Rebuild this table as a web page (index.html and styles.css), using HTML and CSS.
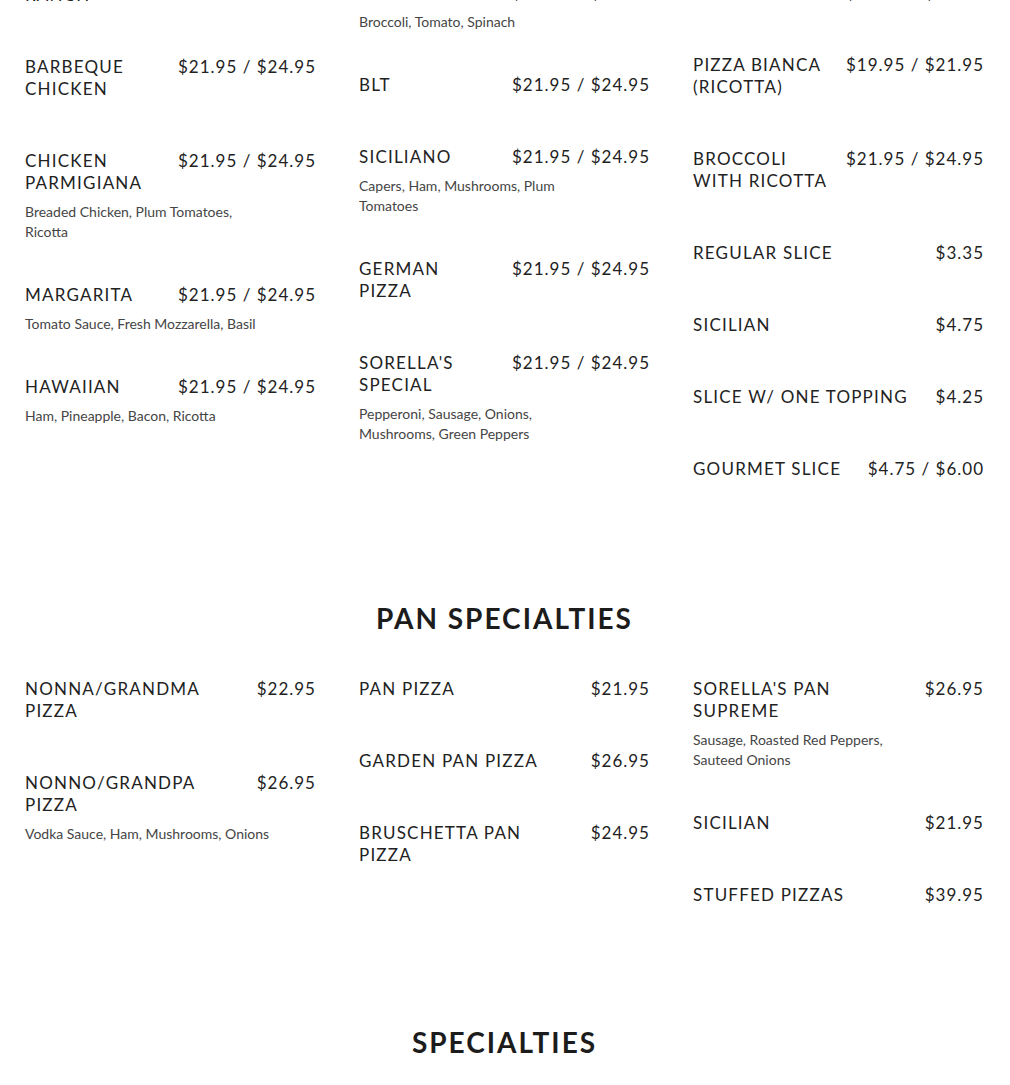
FILE: index.html
```html
<!DOCTYPE html>
<html lang="en">
<head>
<meta charset="utf-8">
<title>Menu</title>
<link rel="stylesheet" href="styles.css">
</head>
<body>
<main class="menu">
  <section class="section section-first">
    <div class="cols">
      <div class="col">
        <div class="item"><div class="head"><h3 class="name">CALZONE</h3><span class="price">$21.95 / $24.95</span></div></div>
        <div class="item"><div class="head"><h3 class="name">BUFFALO RANCH</h3><span class="price">$21.95 / $24.95</span></div></div>
        <div class="item"><div class="head"><h3 class="name">BARBEQUE CHICKEN</h3><span class="price">$21.95 / $24.95</span></div></div>
        <div class="item"><div class="head"><h3 class="name">CHICKEN PARMIGIANA</h3><span class="price">$21.95 / $24.95</span></div><p class="desc">Breaded Chicken, Plum Tomatoes, Ricotta</p></div>
        <div class="item"><div class="head"><h3 class="name">MARGARITA</h3><span class="price">$21.95 / $24.95</span></div><p class="desc">Tomato Sauce, Fresh Mozzarella, Basil</p></div>
        <div class="item"><div class="head"><h3 class="name">HAWAIIAN</h3><span class="price">$21.95 / $24.95</span></div><p class="desc">Ham, Pineapple, Bacon, Ricotta</p></div>
      </div>
      <div class="col">
        <div class="item"><div class="head"><h3 class="name">MEAT LOVERS</h3><span class="price">$21.95 / $24.95</span></div><p class="desc">Pepperoni, Sausage, Meatball</p></div>
        <div class="item"><div class="head"><h3 class="name">VEGGIE</h3><span class="price">$21.95 / $24.95</span></div><p class="desc">Broccoli, Tomato, Spinach</p></div>
        <div class="item"><div class="head"><h3 class="name">BLT</h3><span class="price">$21.95 / $24.95</span></div></div>
        <div class="item"><div class="head"><h3 class="name">SICILIANO</h3><span class="price">$21.95 / $24.95</span></div><p class="desc">Capers, Ham, Mushrooms, Plum Tomatoes</p></div>
        <div class="item"><div class="head"><h3 class="name">GERMAN PIZZA</h3><span class="price">$21.95 / $24.95</span></div></div>
        <div class="item"><div class="head"><h3 class="name">SORELLA'S SPECIAL</h3><span class="price">$21.95 / $24.95</span></div><p class="desc">Pepperoni, Sausage, Onions, Mushrooms, Green Peppers</p></div>
      </div>
      <div class="col">
        <div class="item"><div class="head"><h3 class="name">WHITE PIZZA</h3><span class="price">$21.95 / $24.95</span></div><p class="desc">Ricotta, Mozzarella, Garlic</p></div>
        <div class="item"><div class="head"><h3 class="name">SPINACH</h3><span class="price">$21.95 / $24.95</span></div></div>
        <div class="item"><div class="head"><h3 class="name">PIZZA BIANCA (RICOTTA)</h3><span class="price">$19.95 / $21.95</span></div></div>
        <div class="item"><div class="head"><h3 class="name">BROCCOLI WITH RICOTTA</h3><span class="price">$21.95 / $24.95</span></div></div>
        <div class="item"><div class="head"><h3 class="name">REGULAR SLICE</h3><span class="price">$3.35</span></div></div>
        <div class="item"><div class="head"><h3 class="name">SICILIAN</h3><span class="price">$4.75</span></div></div>
        <div class="item"><div class="head"><h3 class="name">SLICE W/ ONE TOPPING</h3><span class="price">$4.25</span></div></div>
        <div class="item"><div class="head"><h3 class="name">GOURMET SLICE</h3><span class="price">$4.75 / $6.00</span></div></div>
      </div>
    </div>
  </section>

  <section class="section">
    <h2 class="section-title">PAN SPECIALTIES</h2>
    <div class="cols">
      <div class="col">
        <div class="item"><div class="head"><h3 class="name">NONNA/GRANDMA PIZZA</h3><span class="price">$22.95</span></div></div>
        <div class="item"><div class="head"><h3 class="name">NONNO/GRANDPA PIZZA</h3><span class="price">$26.95</span></div><p class="desc">Vodka Sauce, Ham, Mushrooms, Onions</p></div>
      </div>
      <div class="col">
        <div class="item"><div class="head"><h3 class="name">PAN PIZZA</h3><span class="price">$21.95</span></div></div>
        <div class="item"><div class="head"><h3 class="name">GARDEN PAN PIZZA</h3><span class="price">$26.95</span></div></div>
        <div class="item"><div class="head"><h3 class="name">BRUSCHETTA PAN PIZZA</h3><span class="price">$24.95</span></div></div>
      </div>
      <div class="col">
        <div class="item"><div class="head"><h3 class="name">SORELLA'S PAN SUPREME</h3><span class="price">$26.95</span></div><p class="desc desc-narrow">Sausage, Roasted Red Peppers, Sauteed Onions</p></div>
        <div class="item"><div class="head"><h3 class="name">SICILIAN</h3><span class="price">$21.95</span></div></div>
        <div class="item"><div class="head"><h3 class="name">STUFFED PIZZAS</h3><span class="price">$39.95</span></div></div>
      </div>
    </div>
  </section>

  <section class="section">
    <h2 class="section-title section-title-last">SPECIALTIES</h2>
  </section>
</main>
</body>
</html>
```
FILE: styles.css
```css
* { box-sizing: border-box; }

html, body {
  margin: 0;
  padding: 0;
  background: #ffffff;
}

body {
  font-family: "Lato", "Liberation Sans", sans-serif;
  color: #222222;
  overflow: hidden;
}

.menu {
  padding: 0 26px 0 25px;
}

.section-first {
  margin-top: -110px;
}

.section-title {
  margin: 71px 0 43px;
  font-size: 28px;
  line-height: 34px;
  font-weight: 700;
  letter-spacing: 2px;
  text-align: center;
  color: #1c1c1c;
}

.section-title-last {
  margin-top: 69px;
}

.cols {
  display: grid;
  grid-template-columns: repeat(3, 1fr);
  column-gap: 43px;
  align-items: start;
}

.col {
  display: flex;
  flex-direction: column;
}

.item {
  padding-bottom: 42px;
}

.head {
  display: flex;
  justify-content: space-between;
  align-items: flex-start;
  gap: 18px;
  padding-bottom: 8px;
}

.name {
  margin: 0;
  font-size: 17px;
  line-height: 22px;
  font-weight: 400;
  letter-spacing: 1.2px;
  color: #222222;
}

.price {
  flex: none;
  font-size: 17px;
  line-height: 22px;
  letter-spacing: 1px;
  color: #222222;
  white-space: nowrap;
}

.desc {
  margin: 0;
  max-width: 85%;
  font-size: 14px;
  line-height: 20px;
  color: #454545;
}

.desc-narrow {
  max-width: 80%;
}
```
